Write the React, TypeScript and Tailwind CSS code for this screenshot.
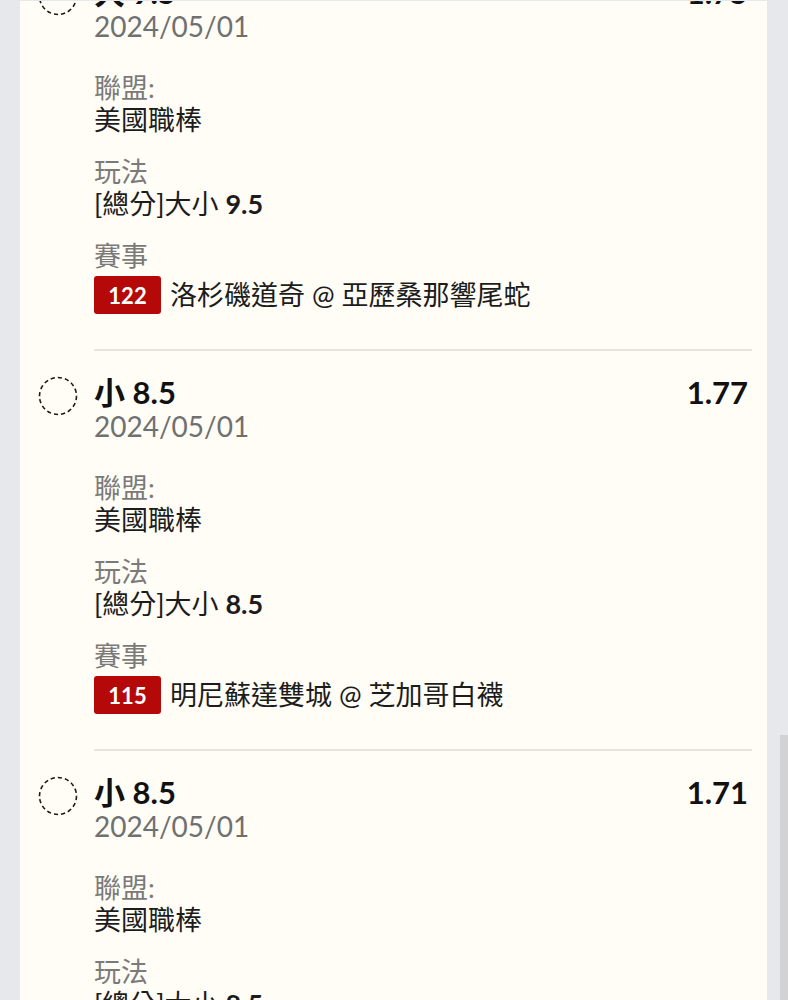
import React from 'react';

type Bet = {
  id: number;
  pick: string;
  odds: string;
  date: string;
  league: string;
  playType: string;
  line: string;
  gameNo: string;
  game: string;
};

const bets: Bet[] = [
  {
    id: 1,
    pick: '大 9.5',
    odds: '1.75',
    date: '2024/05/01',
    league: '美國職棒',
    playType: '[總分]大小',
    line: '9.5',
    gameNo: '122',
    game: '洛杉磯道奇 @ 亞歷桑那響尾蛇',
  },
  {
    id: 2,
    pick: '小 8.5',
    odds: '1.77',
    date: '2024/05/01',
    league: '美國職棒',
    playType: '[總分]大小',
    line: '8.5',
    gameNo: '115',
    game: '明尼蘇達雙城 @ 芝加哥白襪',
  },
  {
    id: 3,
    pick: '小 8.5',
    odds: '1.71',
    date: '2024/05/01',
    league: '美國職棒',
    playType: '[總分]大小',
    line: '8.5',
    gameNo: '131',
    game: '紐約洋基 @ 底特律老虎',
  },
];

const DashedCircle = () => (
  <svg width="40" height="40" viewBox="0 0 40 40" className="block">
    <circle cx="20" cy="20" r="18.5" fill="none" stroke="#1a1a1a" strokeWidth="1.6" strokeDasharray="4.2 3" />
  </svg>
);

const BetRow: React.FC<{ bet: Bet }> = ({ bet }) => (
  <div className="flex">
    <div className="w-[40px] mr-[16px] pt-[1px] shrink-0">
      <DashedCircle />
    </div>
    <div className="flex-1 min-w-0">
      <div className="flex items-center justify-between h-[34px]">
        <span className="text-[31px] font-bold text-[#111] leading-[34px]">{bet.pick}</span>
        <span className="text-[31px] font-bold text-[#111] leading-[34px] pr-[4px]">{bet.odds}</span>
      </div>
      <div className="text-[28px] leading-[34px] text-[#707070]">{bet.date}</div>

      <div className="mt-[29px] text-[27px] leading-[32px] text-[#7a7a7a]">聯盟:</div>
      <div className="text-[27px] leading-[32px] text-[#1c1c1c]">{bet.league}</div>

      <div className="mt-[20px] text-[27px] leading-[32px] text-[#7a7a7a]">玩法</div>
      <div className="text-[27px] leading-[32px] text-[#1c1c1c]">
        {bet.playType} <span className="font-bold">{bet.line}</span>
      </div>

      <div className="mt-[20px] text-[27px] leading-[32px] text-[#7a7a7a]">賽事</div>
      <div className="mt-[4px] flex items-center h-[38px]">
        <span className="h-[38px] w-[67px] flex items-center justify-center rounded-[3px] bg-[#b50808] text-white text-[22px] font-bold">
          {bet.gameNo}
        </span>
        <span className="ml-[9px] text-[27px] text-[#1c1c1c] whitespace-nowrap">{bet.game}</span>
      </div>

      <div className="mt-[35px] h-[2px] bg-[#e6e4de]" />
      <div className="h-[24px]" />
    </div>
  </div>
);

export default function App() {
  return (
    <div
      className="relative h-[1000px] overflow-hidden bg-[#e7e8eb] pt-[1px]"
      style={{ fontFamily: 'Lato, "Noto Sans CJK TC", sans-serif' }}
    >
      <div className="ml-[20px] w-[747px] h-[999px] overflow-hidden bg-[#fffdf6]">
        <div className="-mt-[26px] pl-[18px] pr-[15px]">
          {bets.map(bet => (
            <BetRow key={bet.id} bet={bet} />
          ))}
        </div>
      </div>
      <div className="absolute right-0 top-[735px] w-[8px] h-[265px] bg-[#d2d2d4]" />
    </div>
  );
}
